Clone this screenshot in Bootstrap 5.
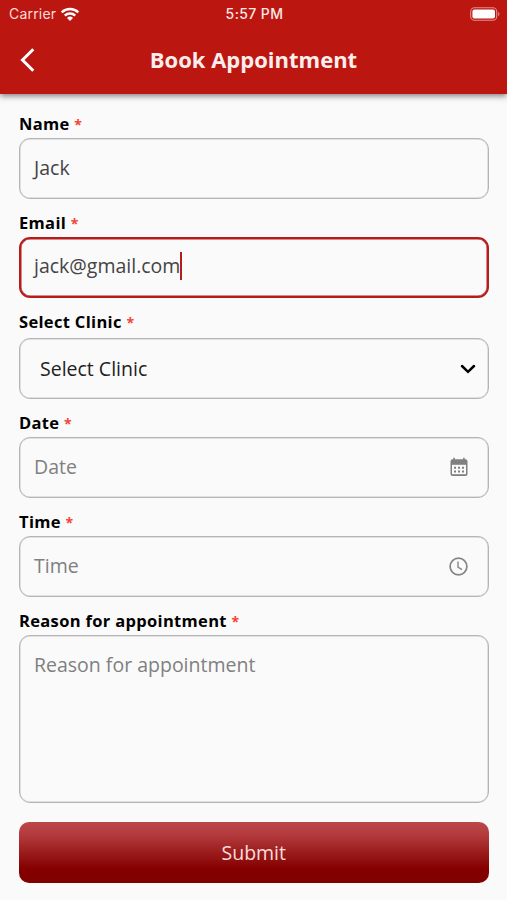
<!DOCTYPE html>
<html lang="en">
<head>
<meta charset="utf-8">
<meta name="viewport" content="width=device-width, initial-scale=1">
<title>Book Appointment</title>
<link href="https://cdn.jsdelivr.net/npm/bootstrap@5.3.0/dist/css/bootstrap.min.css" rel="stylesheet">
<style>
  body { font-family: "Open Sans", "Noto Sans", sans-serif; background: #fafafa; color: #000; overflow: hidden; }
  .app-header { height: 94px; background: #bb1710; color: #fff; box-shadow: 0 2px 6px rgba(0,0,0,.5); }
  .status-bar { height: 28px; padding: 0 7px 0 9px; font-family: Inter, "Liberation Sans", sans-serif; font-size: 14px; line-height: 28px; color: #fbdcd9; }
  .status-bar .carrier { letter-spacing: .2px; }
  .status-bar .clock { font-weight: 500; color: #fbe8e6; letter-spacing: .4px; }
  .title-bar { height: 64px; padding: 0 20px 2px; }
  .title-bar h1 { font-size: 22px; font-weight: 700; line-height: 30px; color: #fdeeed; }
  .title-bar svg { margin-top: 2px; }
  .side { width: 80px; }
  .form-area { padding: 18px 18.5px 0 19px; }
  .field { margin-bottom: 12px; }
  .field label { display: block; height: 26px; line-height: 24px; font-size: 16.5px; font-weight: 700; letter-spacing: .33px; white-space: nowrap; }
  .field label span { color: #f44336; font-size: 14px; }
  .field-select label { height: 28px; }
  .box { height: 61px; border: 1.5px solid #b5b5b5; border-radius: 11px; padding: 0 20px 2px 14px; font-size: 19.5px; line-height: 28px; color: #444; box-shadow: inset 0 0 0 .5px #c8c8c8; }
  .box.active { border: 2px solid #b71c1c; padding: 0 13px 3px; box-shadow: inset 0 0 0 .5px #b71c1c; }
  .box.hint { color: #808080; padding-bottom: 1px; }
  .field-select .box { color: #222; padding: 0 12px 0 20px; }
  .field-area .box { height: 168px; padding-top: 15px; }
  .caret { width: 2px; height: 28px; background: #b71c1c; }
  .submit-btn { height: 61px; border: 0; border-radius: 10px; font-size: 19.5px; color: #fbdcd9; margin-top: 19px; padding: 0; background: linear-gradient(#bc4747 0%, #b43c3e 20%, #850000 76%, #800000 100%); }
</style>
<script src="https://cdn.jsdelivr.net/npm/bootstrap@5.3.0/dist/js/bootstrap.bundle.min.js"></script>
</head>
<body>
<header class="app-header">
  <div class="status-bar d-flex align-items-center justify-content-between">
    <div class="side d-flex align-items-center gap-1">
      <span class="carrier">Carrier</span>
      <svg class="flex-shrink-0" width="20" height="15" viewBox="0 0 20 15" fill="none" stroke="#fff" stroke-width="2.500">
        <path d="M1.700 5.300a12 12 0 0 1 16.600 0M4.800 8.600a7.500 7.500 0 0 1 10.400 0"/>
        <path d="M7 11a4.400 4.400 0 0 1 6 0l-3 3z" fill="#fff" stroke="none"/>
      </svg>
    </div>
    <span class="clock">5:57 PM</span>
    <div class="side d-flex justify-content-end">
      <svg width="30" height="14" viewBox="0 0 30 14">
        <rect x=".7" y=".7" width="26" height="12.600" rx="3.800" fill="none" stroke="#e38f89" stroke-width="1.100"/>
        <rect x="2.400" y="2.400" width="22.600" height="9.200" rx="2" fill="#fff"/>
        <path d="M28.200 4.800c1.700.7 1.700 3.700 0 4.400z" fill="#e38f89"/>
      </svg>
    </div>
  </div>
  <div class="title-bar d-flex align-items-center justify-content-between">
    <div class="side d-flex">
      <svg width="16" height="26" viewBox="0 0 16 26" fill="none" stroke="#fff" stroke-width="3"><path d="M13.300 2.200 2.500 13l10.800 10.800"/></svg>
    </div>
    <h1 class="m-0 text-nowrap">Book Appointment</h1>
    <div class="side"></div>
  </div>
</header>
<main class="form-area">
  <div class="field">
    <label>Name <span>*</span></label>
    <div class="box d-flex align-items-center"><span>Jack</span></div>
  </div>
  <div class="field">
    <label>Email <span>*</span></label>
    <div class="box active d-flex align-items-center"><span>jack@gmail.com</span><i class="caret"></i></div>
  </div>
  <div class="field field-select">
    <label>Select Clinic <span>*</span></label>
    <div class="box d-flex align-items-center justify-content-between">
      <span>Select Clinic</span>
      <svg width="16" height="10" viewBox="0 0 16 10" fill="none" stroke="#000" stroke-width="2.500" stroke-linecap="round"><path d="m2 2 6 5.800L14 2"/></svg>
    </div>
  </div>
  <div class="field">
    <label>Date <span>*</span></label>
    <div class="box hint d-flex align-items-center justify-content-between">
      <span>Date</span>
      <svg width="18" height="20" viewBox="0 0 18 20">
        <path d="M2.500 2.200h.8V.8h1.600v1.400h8.200V.8h1.600v1.400h.8a2 2 0 0 1 2 2V17a2 2 0 0 1-2 2h-13a2 2 0 0 1-2-2V4.200a2 2 0 0 1 2-2z" fill="#808080"/>
        <path d="M2 7.800h14v9.400H2z" fill="#fafafa"/>
        <path d="M4 10.700h10M4 14.500h10" stroke="#808080" stroke-width="2" stroke-dasharray="2 2"/>
      </svg>
    </div>
  </div>
  <div class="field">
    <label>Time <span>*</span></label>
    <div class="box hint d-flex align-items-center justify-content-between">
      <span>Time</span>
      <svg width="19" height="19" viewBox="0 0 19 19" fill="none" stroke="#858585"><circle cx="9.500" cy="9.500" r="8.400" stroke-width="1.700"/><path d="M9 4.500v5.700l4 2.400" stroke-width="1.400"/></svg>
    </div>
  </div>
  <div class="field field-area mb-0">
    <label>Reason for appointment <span>*</span></label>
    <div class="box hint">Reason for appointment</div>
  </div>
  <button class="btn submit-btn w-100" type="button">Submit</button>
</main>
</body>
</html>
